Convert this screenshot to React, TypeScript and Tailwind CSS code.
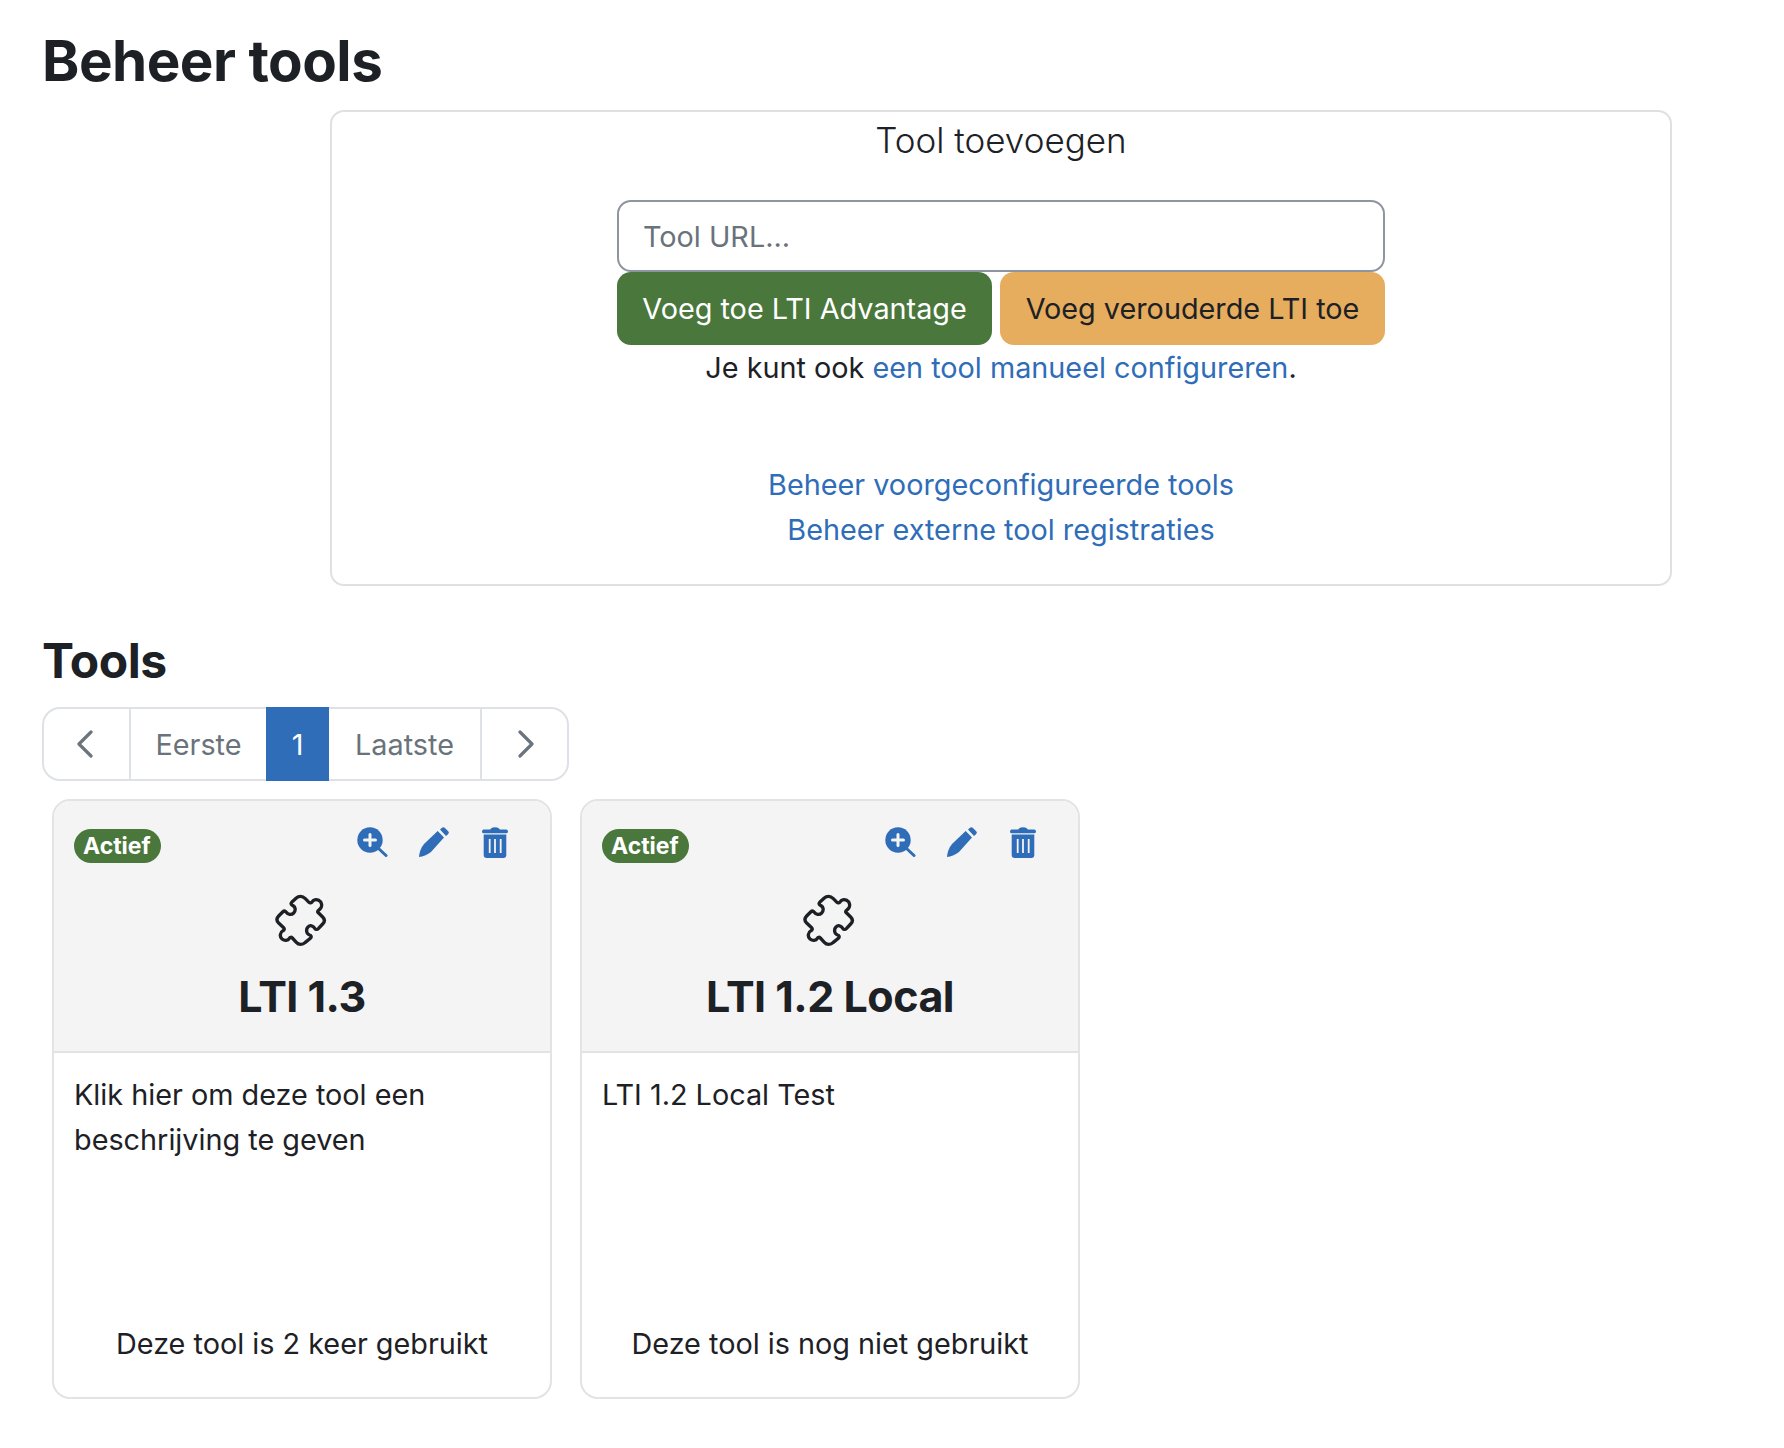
const tools = [
  { name: 'LTI 1.3', desc: 'Klik hier om deze tool een beschrijving te geven', usage: 'Deze tool is 2 keer gebruikt' },
  { name: 'LTI 1.2 Local', desc: 'LTI 1.2 Local Test', usage: 'Deze tool is nog niet gebruikt' },
];

function ZoomIcon() {
  return (
    <svg width="31" height="30" viewBox="0 0 31 30" className="text-[#2f6db8]">
      <circle cx="13" cy="13" r="12.7" fill="currentColor" />
      <path d="M20.5 20.5L29 28.5" stroke="currentColor" strokeWidth="3" strokeLinecap="round" />
      <path d="M13 7.5v11M7.5 13h11" stroke="#f4f4f4" strokeWidth="3" strokeLinecap="round" />
    </svg>
  );
}

function PencilIcon() {
  return (
    <svg width="30" height="30" viewBox="0 0 30 30" className="text-[#2f6db8] -ml-[1px] mr-[1px]">
      <path d="M0 30C.4 26 1.5 21 5 17L18.7 4L25 10.5L12 25C8 28 4 29.5 0 30Z" fill="currentColor" />
      <path d="M21 2.5L23 .8a2 2 0 0 1 2.7 0L29.2 4.2a2 2 0 0 1 0 2.7L27 9Z" fill="currentColor" />
    </svg>
  );
}

function TrashIcon() {
  return (
    <svg width="26" height="31" viewBox="0 0 26 31" className="text-[#2f6db8]">
      <path d="M8 3.5C8.5 1 10 .3 13 .3S17.5 1 18 3.5Z" fill="currentColor" />
      <rect x="0" y="2.5" width="26" height="3.8" rx="1.9" fill="currentColor" />
      <path d="M1.7 7.5h22.6V28a3 3 0 0 1-3 3H4.7a3 3 0 0 1-3-3Z" fill="currentColor" />
      <path d="M7.7 12v14M13 12v14M18.700 12v14" stroke="#f4f4f4" strokeWidth="1.8" />
    </svg>
  );
}

function PuzzleIcon() {
  return (
    <svg width="55" height="55" viewBox="100 40 165 165" fill="none" stroke="#1d2125" strokeWidth="10" strokeLinejoin="round" className="-ml-[2px]">
      <path d="M180 50C186 50 190 53 194 57L205 68C208 71 212 70 214 67C218 60 226 58 234 62C244 67 246 80 238 88C235 91 230 92 231 97L246 112C253 119 253 126 246 133L233 147C229 151 224 149 222 146C218 138 208 135 202 142C195 149 197 163 207 166C211 167 213 171 210 175L194 188C186 196 174 196 167 188L155 175C152 172 148 172 146 176C142 183 132 184 124 178C116 171 118 158 127 153C131 151 132 147 129 144L114 130C107 123 107 116 114 109L126 97C130 93 133 93 136 97C142 105 152 107 159 100C166 93 165 81 155 77C151 75 150 71 153 68L167 55C171 51 175 50 180 50Z" />
    </svg>
  );
}

function Chevron({ dir }: { dir: 'left' | 'right' }) {
  return (
    <svg
      width="16"
      height="28"
      viewBox="0 0 16 28"
      fill="none"
      stroke="#6c757d"
      strokeWidth="3.2"
      strokeLinecap="round"
      strokeLinejoin="round"
      className={dir === 'left' ? '-ml-[4px]' : 'ml-[3px]'}
    >
      <path d={dir === 'left' ? 'M14 2L2 14L14 26' : 'M2 2L14 14L2 26'} />
    </svg>
  );
}

function ToolCard({ name, desc, usage }: { name: string; desc: string; usage: string }) {
  return (
    <div className="w-[500px] h-[600px] flex flex-col border-2 border-[#e3e3e3] rounded-[18px] overflow-hidden">
      <div className="h-[252px] bg-[#f4f4f4] border-b-2 border-[#e3e3e3] flex flex-col px-[19px] pt-[27px] shrink-0">
        <div className="flex justify-between items-start h-[36px]">
          <span className="h-[34px] mt-[1px] ml-[1px] pl-[9px] pr-[10px] flex items-center rounded-full bg-[#4a773c] text-white text-[23px] font-bold leading-none">
            Actief
          </span>
          <div className="flex items-start gap-[32px] pr-[23px] -mt-[1px]">
            <ZoomIcon />
            <PencilIcon />
            <TrashIcon />
          </div>
        </div>
        <div className="flex justify-center mt-[29px]">
          <PuzzleIcon />
        </div>
        <h3 className="text-[43px] font-bold text-center mt-[18px] leading-[60px] tracking-[-0.5px]">{name}</h3>
      </div>
      <div className="flex-1 flex flex-col justify-between px-[20px] pt-[19px] pb-[31px]">
        <p className="leading-[45px]">{desc}</p>
        <p className="text-center">{usage}</p>
      </div>
    </div>
  );
}

export default function App() {
  return (
    <div className="min-h-[1448px] bg-white text-[#1d2125] text-[28.8px] leading-[45.5px] px-[42px] pt-[25px] font-['Inter',sans-serif]">
      <h1 className="text-[56.5px] font-bold leading-[72px] tracking-[-0.5px] mb-[13px]">Beheer tools</h1>

      <div className="ml-[288px] w-[1342px] h-[476px] border-2 border-[#e0e0e0] rounded-[14px] flex flex-col items-center pt-[2px]">
        <h2 className="text-[35px] font-light leading-[52px] mb-[34px]">Tool toevoegen</h2>
        <div className="w-[768px]">
          <input
            placeholder="Tool URL..."
            className="w-full h-[72px] border-2 border-[#8f959e] rounded-[14px] px-[24px] pt-[1px] outline-none placeholder:text-[#6a737b]"
          />
          <div className="flex justify-between">
            <button className="w-[375px] h-[73px] pt-[1px] bg-[#4a773c] text-white rounded-[14px]">Voeg toe LTI Advantage</button>
            <button className="w-[385px] h-[73px] pt-[1px] bg-[#e6ad5e] text-[#1d2125] rounded-[14px]">Voeg verouderde LTI toe</button>
          </div>
        </div>
        <p>
          Je kunt ook <a className="text-[#2f6db8]">een tool manueel configureren</a>.
        </p>
        <a className="text-[#2f6db8] mt-[71px]">Beheer voorgeconfigureerde tools</a>
        <a className="text-[#2f6db8]">Beheer externe tool registraties</a>
      </div>

      <h2 className="text-[48px] font-bold leading-[60px] tracking-[-0.5px] mt-[45px] mb-[16px]">Tools</h2>

      <nav className="flex w-[527px] h-[74px] text-[#6a737b]">
        <a className="w-[89px] flex items-center justify-center border-2 border-[#dee2e6] rounded-l-[18px]">
          <Chevron dir="left" />
        </a>
        <a className="w-[135px] pt-[2px] flex items-center justify-center border-y-2 border-[#dee2e6]">Eerste</a>
        <a className="w-[63px] pt-[2px] flex items-center justify-center bg-[#2f6db8] text-white">1</a>
        <a className="w-[151px] pt-[2px] flex items-center justify-center border-y-2 border-[#dee2e6]">Laatste</a>
        <a className="w-[89px] flex items-center justify-center border-2 border-[#dee2e6] rounded-r-[18px]">
          <Chevron dir="right" />
        </a>
      </nav>

      <div className="flex gap-[28px] ml-[10px] mt-[18px]">
        {tools.map((t) => (
          <ToolCard key={t.name} {...t} />
        ))}
      </div>
    </div>
  );
}
